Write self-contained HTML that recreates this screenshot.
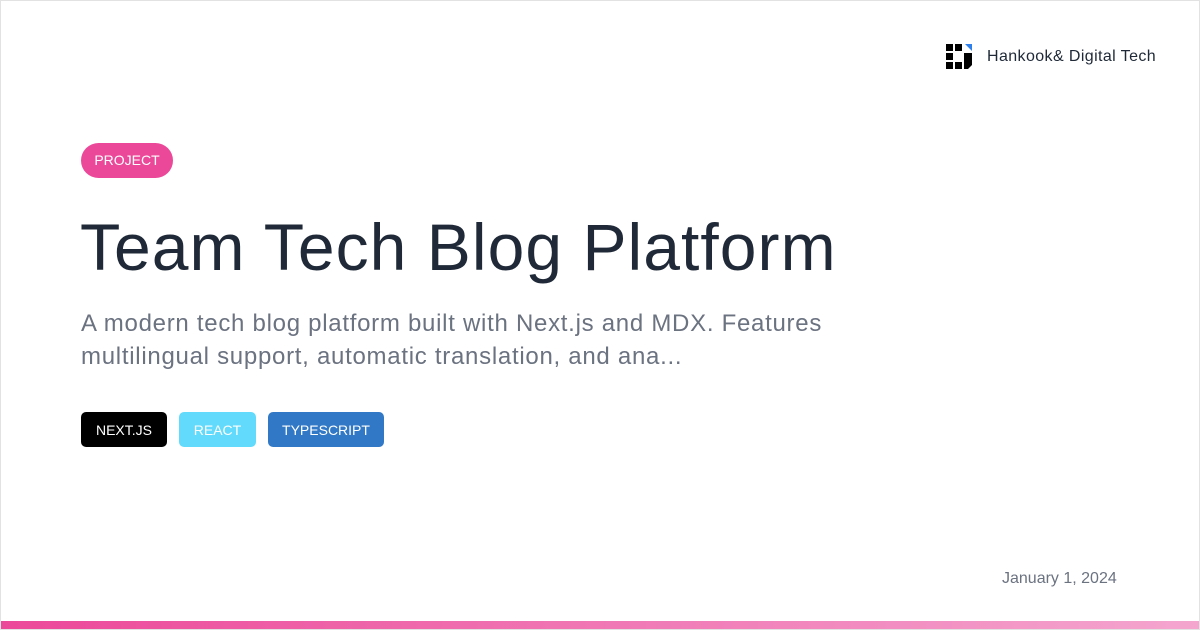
<!DOCTYPE html>
<html><head><meta charset="utf-8"><style>
*{margin:0;padding:0;box-sizing:border-box}
body{width:1200px;height:630px;background:#fff;font-family:"Liberation Sans","DejaVu Sans",sans-serif;position:relative;overflow:hidden}
.frame{position:absolute;inset:0;border:1px solid #e2e2e2}
.bar{position:absolute;left:1px;right:1px;top:621px;height:8px;background:linear-gradient(90deg,#ec4899,#f4a6cf)}
.logo{position:absolute;left:946px;top:44px}
.brand{position:absolute;left:987px;top:48px;font-size:16px;color:#1f2937;letter-spacing:0.4px}
.pill{position:absolute;left:81px;top:143px;height:35px;width:92px;border-radius:18px;background:#ec4899;color:#fff;font-size:14px;line-height:35px;text-align:center}
h1{position:absolute;left:80px;top:209px;font-size:66px;font-weight:400;color:#1f2937;letter-spacing:1.05px;white-space:nowrap}
p{position:absolute;left:81px;top:307px;width:820px;font-size:24px;line-height:33px;color:#6b7280;letter-spacing:0.72px}
.tag{position:absolute;top:412px;height:35px;border-radius:5px;color:#fff;font-size:14px;line-height:36px;text-align:center}
.date{position:absolute;left:1002px;top:570px;font-size:16px;color:#6b7280}
</style></head><body>
<div class="frame"></div>
<svg class="logo" width="27" height="26" viewBox="0 0 27 26">
<rect x="0" y="0" width="7" height="7" fill="#000"/><rect x="9" y="0" width="7" height="7" fill="#000"/>
<rect x="0" y="9" width="7" height="7" fill="#000"/>
<rect x="0" y="18" width="7" height="7" fill="#000"/><rect x="9" y="18" width="7" height="7" fill="#000"/>
<polygon points="19,0 26,0 26,7" fill="#2f80ed"/>
<polygon points="18,9 26,9 26,21 22,25 18,25" fill="#000"/>
</svg>
<div class="brand">Hankook&amp; Digital Tech</div>
<div class="pill">PROJECT</div>
<h1>Team Tech Blog Platform</h1>
<p>A modern tech blog platform built with Next.js and MDX. Features<br>multilingual support, automatic translation, and ana...</p>
<div class="tag" style="left:81px;width:86px;background:#000">NEXT.JS</div>
<div class="tag" style="left:179px;width:77px;background:#61dafb">REACT</div>
<div class="tag" style="left:268px;width:116px;background:#3178c6">TYPESCRIPT</div>
<div class="date">January 1, 2024</div>
<div class="bar"></div>
</body></html>
